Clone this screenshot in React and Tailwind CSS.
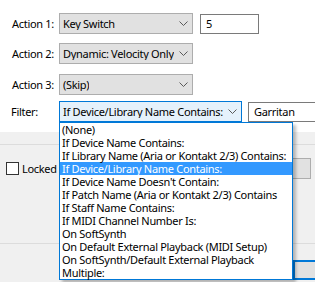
import React from "react";

const Chevron = () => (
  <svg width="9" height="5" viewBox="0 0 9 5" className="shrink-0">
    <polyline points="0.5,0.5 4.5,4.5 8.5,0.5" fill="none" stroke="#5a5a5a" strokeWidth="1" />
  </svg>
);

const Select = ({ w, text, active }) => (
  <div
    className={
      "h-[21px] flex items-center justify-between pl-[3px] pr-[4px] border shrink-0 " +
      (active ? "bg-[#e5f1fb] border-[#0078d7]" : "bg-[#e1e1e1] border-[#adadad]")
    }
    style={{ width: w }}
  >
    <span className="whitespace-nowrap overflow-hidden">{text}</span>
    <Chevron />
  </div>
);

const items = [
  "(None)",
  "If Device Name Contains:",
  "If Library Name (Aria or Kontakt 2/3) Contains:",
  "If Device/Library Name Contains:",
  "If Device Name Doesn't Contain:",
  "If Patch Name (Aria or Kontakt 2/3) Contains",
  "If Staff Name Contains:",
  "If MIDI Channel Number Is:",
  "On SoftSynth",
  "On Default External Playback (MIDI Setup)",
  "On SoftSynth/Default External Playback",
  "Multiple:",
];

export default function App() {
  return (
    <div
      className="w-[315px] h-[282px] relative overflow-hidden bg-[#f0f0f0] text-[11px] leading-[13px] tracking-[-0.3px] text-black"
      style={{ fontFamily: '"Noto Sans", "Open Sans", sans-serif' }}
    >
      <div className="bg-white h-[132px] pt-[13px]">
        <div className="flex items-center">
          <div className="w-[59px] pl-[12px] whitespace-nowrap shrink-0">Action 1:</div>
          <Select w={134} text="Key Switch" />
          <div className="ml-[7px] w-[59px] h-[20px] border border-[#7a7a7a] bg-white flex items-center pl-[5px] shrink-0">5</div>
        </div>
        <div className="flex items-center mt-[9px]">
          <div className="w-[59px] pl-[12px] whitespace-nowrap shrink-0">Action 2:</div>
          <Select w={134} text="Dynamic: Velocity Only" />
        </div>
        <div className="flex items-center mt-[10px]">
          <div className="w-[59px] pl-[12px] whitespace-nowrap shrink-0">Action 3:</div>
          <Select w={134} text="(Skip)" />
        </div>
        <div className="flex items-center mt-[6px]">
          <div className="w-[59px] pl-[11px] whitespace-nowrap shrink-0">Filter:</div>
          <Select w={183} text="If Device/Library Name Contains:" active />
          <div className="ml-[6px] w-[80px] h-[20px] border border-[#7a7a7a] bg-white flex items-center pl-[5px] shrink-0">Garritan</div>
        </div>
      </div>
      <div className="h-[13px] border-b border-[#dcdcdc]" />
      <div className="flex items-center mt-[13px]">
        <div className="ml-[6px] w-[13px] h-[13px] border border-[#333333] bg-white shrink-0" />
        <span className="ml-[3px] whitespace-nowrap">Locked</span>
        <div className="ml-auto mr-[4px] w-[80px] h-[21px] border border-[#adadad] bg-[#e1e1e1] shrink-0" />
      </div>
      <div className="mt-[64px] border-t border-[#dcdcdc]" />
      <div className="mt-[16px] ml-[293px] w-[40px] h-[20px] border-2 border-[#0078d7] bg-[#e1e1e1]" />

      <div className="absolute left-[59px] top-[122px] w-[234px] border border-[#0078d7] bg-white shadow-[3px_3px_3px_rgba(0,0,0,0.25)]">
        {items.map((t, i) => (
          <div
            key={i}
            className={
              "h-[13px] pl-[2px] whitespace-nowrap flex items-center " +
              (i === 3 ? "bg-[#3399ff] text-white" : "")
            }
          >
            {t}
          </div>
        ))}
      </div>
    </div>
  );
}
